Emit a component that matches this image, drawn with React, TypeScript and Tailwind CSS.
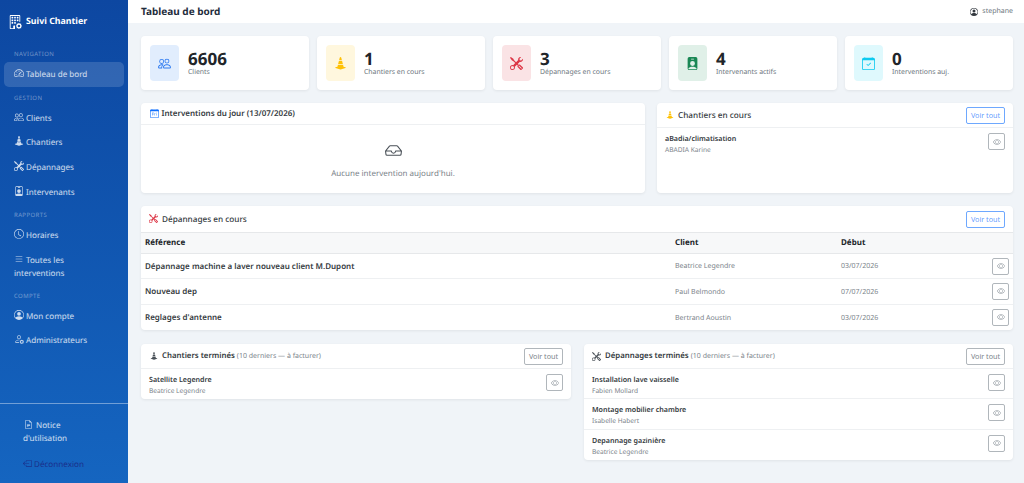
import {
  BsBoxArrowLeft,
  BsBuildingGear,
  BsCalendarCheck,
  BsCalendarDay,
  BsClock,
  BsConeStriped,
  BsEye,
  BsFileEarmarkText,
  BsInbox,
  BsList,
  BsPeople,
  BsPersonBadge,
  BsPersonBadgeFill,
  BsPersonCircle,
  BsPersonGear,
  BsSpeedometer2,
  BsTools,
} from 'react-icons/bs';
import type { ReactNode } from 'react';

const stats = [
  { value: '6606', label: 'Clients', box: 'bg-[#e1edfd]', color: 'text-[#2f7bf0]', icon: <BsPeople /> },
  { value: '1', label: 'Chantiers en cours', box: 'bg-[#fff7de]', color: 'text-[#ffc107]', icon: <BsConeStriped /> },
  { value: '3', label: 'Dépannages en cours', box: 'bg-[#fae3e5]', color: 'text-[#dc3545]', icon: <BsTools /> },
  { value: '4', label: 'Intervenants actifs', box: 'bg-[#e0f0e8]', color: 'text-[#198754]', icon: <BsPersonBadgeFill /> },
  { value: '0', label: 'Interventions auj.', box: 'bg-[#dff9fd]', color: 'text-[#0dcaf0]', icon: <BsCalendarCheck /> },
];

const depannages = [
  { ref: 'Dépannage machine a laver nouveau client M.Dupont', client: 'Beatrice Legendre', date: '03/07/2026' },
  { ref: 'Nouveau dep', client: 'Paul Belmondo', date: '07/07/2026' },
  { ref: "Reglages d'antenne", client: 'Bertrand Aoustin', date: '03/07/2026' },
];

const termines = [
  { title: 'Installation lave vaisselle', who: 'Fabien Mollard' },
  { title: 'Montage mobilier chambre', who: 'Isabelle Habert' },
  { title: 'Depannage gazinière', who: 'Beatrice Legendre' },
];

const SectionLabel = ({ children, className }: { children: string; className: string }) => (
  <div className={`px-[14px] text-[6px] leading-[10px] tracking-[0.4px] uppercase text-white/40 ${className}`}>{children}</div>
);

const NavItem = ({ icon, children, active }: { icon: ReactNode; children: ReactNode; active?: boolean }) => (
  <div className={`mx-[4px] px-[10px] py-[5.85px] rounded-[5px] text-[8.1px] leading-[13px] text-white/80 ${active ? 'bg-white/15 text-white py-[5.5px]' : ''}`}>
    <span className="inline-block align-[-1px] mr-[2px] text-[10px]">{icon}</span>
    {children}
  </div>
);

const EyeButton = () => (
  <button className="w-[17px] h-[17px] shrink-0 flex items-center justify-center border border-[#b0b6bb] rounded-[2px] text-[#8a9299] text-[8px]">
    <BsEye />
  </button>
);

const VoirTout = ({ blue }: { blue?: boolean }) => (
  <button className={`h-[17px] w-[39px] pt-[1px] shrink-0 text-[7.2px] font-normal border rounded-[2px] ${blue ? 'border-[#0d6efd]/60 text-[#0d6efd]/70' : 'border-[#b0b6bb] text-[#7b838a]'}`}>
    Voir tout
  </button>
);

const Card = ({ children, className = '' }: { children: ReactNode; className?: string }) => (
  <div className={`bg-white rounded-[4px] shadow-[0_1px_3px_rgba(0,0,0,0.07)] ${className}`}>{children}</div>
);

const ListRow = ({ title, who, border }: { title: string; who: string; border?: boolean }) => (
  <div className={`flex justify-between items-start h-[30.4px] pl-[8px] pr-[8px] pt-[5px] ${border ? 'border-b border-[#eef0f2]' : ''}`}>
    <div className="pt-[1px]">
      <div className="text-[7.1px] leading-[11px] font-semibold text-[#343a40]">{title}</div>
      <div className="text-[6.6px] leading-[10px] text-[#7b838a]">{who}</div>
    </div>
    <EyeButton />
  </div>
);

export default function App() {
  return (
    <div className="flex h-[483px] overflow-hidden bg-[#f0f4f8] font-['Noto_Sans',sans-serif] [text-rendering:geometricPrecision]">
      <aside className="w-[128px] shrink-0 flex flex-col bg-gradient-to-b from-[#0d47a1] to-[#1565c0]">
        <div className="flex items-center gap-[4px] px-[8px] h-[43px] text-white font-bold text-[8.8px]">
          <BsBuildingGear className="text-[14px]" />
          Suivi Chantier
        </div>
        <SectionLabel className="mt-[6px] mb-[3px]">Navigation</SectionLabel>
        <NavItem icon={<BsSpeedometer2 />} active>Tableau de bord</NavItem>
        <SectionLabel className="mt-[6px] mb-[3px]">Gestion</SectionLabel>
        <NavItem icon={<BsPeople />}>Clients</NavItem>
        <NavItem icon={<BsConeStriped />}>Chantiers</NavItem>
        <NavItem icon={<BsTools />}>Dépannages</NavItem>
        <NavItem icon={<BsPersonBadge />}>Intervenants</NavItem>
        <SectionLabel className="mt-[6px] mb-[3px]">Rapports</SectionLabel>
        <NavItem icon={<BsClock />}>Horaires</NavItem>
        <NavItem icon={<BsList />}>Toutes les interventions</NavItem>
        <SectionLabel className="mt-[5px] mb-[3px]">Compte</SectionLabel>
        <NavItem icon={<BsPersonCircle />}>Mon compte</NavItem>
        <NavItem icon={<BsPersonGear />}>Administrateurs</NavItem>
        <div className="mt-auto border-t border-white/40 h-[80px] pt-[15px]">
          <div className="pl-[23px] pr-[40px] text-[8.1px] leading-[13px] text-white/80">
            <span className="inline-block align-[-1px] ml-[1px] mr-[3px] text-[9px]"><BsFileEarmarkText /></span>
            Notice d'utilisation
          </div>
          <div className="pl-[23px] mt-[13px] text-[8.1px] leading-[13px] text-[#1a2f8a]">
            <span className="inline-block align-[-1px] mr-[2px] text-[9px]"><BsBoxArrowLeft /></span>
            Déconnexion
          </div>
        </div>
      </aside>

      <div className="flex-1 min-w-0">
        <header className="h-[23px] bg-white flex items-center justify-between pl-[13px] pr-[11px]">
          <h1 className="text-[10px] font-bold text-[#1f2d3d]">Tableau de bord</h1>
          <div className="flex items-center gap-[4px] text-[7px] text-[#6c757d]">
            <BsPersonCircle className="text-[8px] text-[#343a40]" />
            <span className="pt-[2px]">stephane</span>
          </div>
        </header>

        <main className="pt-[13px] pl-[13px] pr-[11px]">
          <div className="grid grid-cols-5 gap-[8px]">
            {stats.map((s) => (
              <Card key={s.label} className="h-[54px] flex items-center pl-[8.5px]">
                <div className={`w-[29.5px] h-[36px] rounded-[4px] flex items-center justify-center text-[13px] ${s.box} ${s.color}`}>{s.icon}</div>
                <div className="ml-[9px] pt-[2px]">
                  <div className="text-[17px] leading-[18px] font-bold text-[#212529]">{s.value}</div>
                  <div className="text-[6.9px] leading-[10px] text-[#6c757d]">{s.label}</div>
                </div>
              </Card>
            ))}
          </div>

          <div className="flex gap-[12px] mt-[13px]">
            <Card className="w-[504px] h-[90px]">
              <div className="h-[22px] flex items-center gap-[3px] pl-[8.5px] border-b border-[#eef0f2] text-[8px] font-semibold text-[#343a40]">
                <BsCalendarDay className="text-[9px] text-[#0d6efd]" />
                <span className="pt-[1px]">Interventions du jour (13/07/2026)</span>
              </div>
              <div className="flex flex-col items-center pt-[17px]">
                <BsInbox className="text-[17px] text-[#495057]" />
                <div className="mt-[9px] text-[8px] text-[#7b838a]">Aucune intervention aujourd'hui.</div>
              </div>
            </Card>
            <Card className="flex-1 h-[90px]">
              <div className="h-[25px] flex items-center justify-between pl-[9px] pr-[8px] border-b border-[#eef0f2] text-[8.2px] font-medium text-[#343a40]">
                <span className="flex items-center gap-[4px]"><BsConeStriped className="text-[8px] text-[#ffc107]" /><span className="pt-[2px]">Chantiers en cours</span></span>
                <VoirTout blue />
              </div>
              <ListRow title="aBadia/climatisation" who="ABADIA Karine" />
            </Card>
          </div>

          <Card className="mt-[13px] h-[124px]">
            <div className="h-[26px] flex items-center justify-between pl-[8px] pr-[8px] text-[8.2px] font-medium text-[#343a40]">
              <span className="flex items-center gap-[4px]"><BsTools className="text-[9px] text-[#dc3545]" /><span className="pt-[2px]">Dépannages en cours</span></span>
              <VoirTout blue />
            </div>
            <div className="grid grid-cols-[530px_166px_1fr] items-center h-[22px] pl-[4px] bg-[#f7f8f9] border-y border-[#e6e8ea] text-[8px] font-bold text-[#212529]">
              <div>Référence</div>
              <div>Client</div>
              <div>Début</div>
            </div>
            {depannages.map((d, i) => (
              <div key={d.ref} className={`grid grid-cols-[530px_166px_1fr] items-center h-[25.33px] pl-[4px] pr-[4px] ${i < 2 ? 'border-b border-[#eef0f2]' : ''}`}>
                <div className="pt-[2px] text-[8px] font-semibold text-[#343a40]">{d.ref}</div>
                <div className="pt-[3px] text-[7px] text-[#7b838a]">{d.client}</div>
                <div className="flex items-center justify-between text-[7px] text-[#7b838a]">
                  <span className="pt-[3px]">{d.date}</span>
                  <EyeButton />
                </div>
              </div>
            ))}
          </Card>

          <div className="flex gap-[13px] mt-[14px] items-start">
            <Card className="w-[430px]">
              <div className="h-[25px] flex items-center justify-between pl-[9px] pr-[8px] border-b border-[#eef0f2] text-[7.8px] font-semibold text-[#343a40]">
                <span className="flex items-center gap-[4px]"><BsConeStriped className="text-[8px] text-[#495057]" /><span className="pt-[2px]">Chantiers terminés<span className="font-normal text-[7px] text-[#7b838a] ml-[2px]">(10 derniers — à facturer)</span></span></span>
                <VoirTout />
              </div>
              <ListRow title="Satellite Legendre" who="Beatrice Legendre" />
            </Card>
            <Card className="flex-1">
              <div className="h-[25px] flex items-center justify-between pl-[8px] pr-[8px] border-b border-[#eef0f2] text-[7.8px] font-semibold text-[#343a40]">
                <span className="flex items-center gap-[4px]"><BsTools className="text-[9px] text-[#495057]" /><span className="pt-[2px]">Dépannages terminés<span className="font-normal text-[7px] text-[#7b838a] ml-[2px]">(10 derniers — à facturer)</span></span></span>
                <VoirTout />
              </div>
              {termines.map((t, i) => (
                <ListRow key={t.title} title={t.title} who={t.who} border={i < 2} />
              ))}
            </Card>
          </div>
        </main>
      </div>
    </div>
  );
}
